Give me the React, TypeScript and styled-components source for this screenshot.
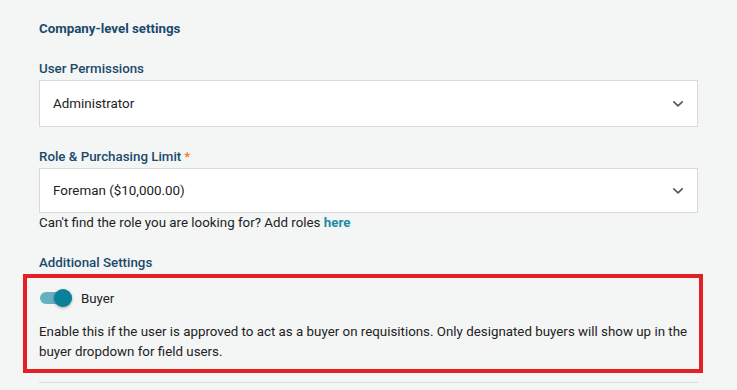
import React, { useState } from "react";
import styled, { createGlobalStyle } from "styled-components";

const Global = createGlobalStyle`
  html, body { margin: 0; padding: 0; background: #f4f6f5; }
  body { font-family: Roboto, "Noto Sans", Arial, sans-serif; color: #222; }
  * { box-sizing: border-box; }
`;

const Page = styled.div`
  padding: 19px 39px 0 39px;
  width: 737px;
  height: 390px;
  overflow: hidden;
`;

const Heading = styled.div`
  font-size: 13.3px;
  font-weight: 700;
  line-height: 20px;
  color: #1b4a6c;
`;

const Label = styled.div<{ $top: number }>`
  margin-top: ${(p) => p.$top}px;
  font-size: 13.33px;
  font-weight: 500;
  line-height: 20px;
  color: #1b4a6c;
  margin-bottom: 1px;
`;

const Required = styled.span`
  color: #f07c2a;
  margin-left: 3px;
`;

const Select = styled.div<{ $h: number }>`
  height: ${(p) => p.$h}px;
  background: #fff;
  border: 1px solid #d9d9d9;
  display: flex;
  align-items: center;
  justify-content: space-between;
  padding: 0 13px 0 13px;
  font-size: 13.4px;
  color: #222;
`;

const Helper = styled.div`
  font-size: 13.33px;
  line-height: 20px;
  color: #222;
`;

const LinkText = styled.a`
  color: #1a8ba3;
  font-weight: 700;
  text-decoration: none;
`;

const Highlight = styled.div`
  margin: 0 -5px 0 -16px;
  border: 4px solid #e41f26;
  padding: 10px 0 7px 12px;
`;

const ToggleRow = styled.div`
  display: flex;
  align-items: center;
  height: 20px;
  gap: 8px;
  font-size: 13.3px;
`;

const Track = styled.button<{ $on: boolean }>`
  position: relative;
  width: 34px;
  height: 20px;
  border: none;
  background: transparent;
  padding: 0;
  cursor: pointer;
  &::before {
    content: "";
    position: absolute;
    left: 1px;
    top: 4px;
    width: 32px;
    height: 12px;
    border-radius: 6px;
    background: ${(p) => (p.$on ? "#66b1c0" : "#bbb")};
  }
  &::after {
    content: "";
    position: absolute;
    top: 1px;
    left: ${(p) => (p.$on ? "15px" : "0px")};
    width: 18px;
    height: 18px;
    border-radius: 50%;
    background: ${(p) => (p.$on ? "#0b8099" : "#fafafa")};
    box-shadow: 0 1px 3px rgba(0, 0, 0, 0.35);
  }
`;

const Description = styled.div`
  margin-top: 14px;
  font-size: 13.33px;
  line-height: 20px;
  color: #222;
`;

const Divider = styled.div`
  margin-top: 9px;
  border-top: 1px solid #dcdcdc;
`;

const Chevron = () => (
  <svg width="12" height="8" viewBox="0 0 12 8" fill="none">
    <path d="M1.8 1.8 L6 5.8 L10.2 1.8" stroke="#555" strokeWidth="1.6" strokeLinecap="round" strokeLinejoin="round" />
  </svg>
);

export default function App() {
  const [on, setOn] = useState(true);
  return (
    <>
      <Global />
      <Page>
        <Heading>Company-level settings</Heading>
        <Label $top={20}>User Permissions</Label>
        <Select $h={47}>
          <span>Administrator</span>
          <Chevron />
        </Select>
        <Label $top={20}>
          Role &amp; Purchasing Limit<Required>*</Required>
        </Label>
        <Select $h={45}>
          <span>Foreman ($10,000.00)</span>
          <Chevron />
        </Select>
        <Helper>
          Can't find the role you are looking for? Add roles <LinkText href="#">here</LinkText>
        </Helper>
        <Label $top={20}>Additional Settings</Label>
        <Highlight>
          <ToggleRow>
            <Track $on={on} onClick={() => setOn(!on)} aria-label="Buyer" />
            <span>Buyer</span>
          </ToggleRow>
          <Description>
            Enable this if the user is approved to act as a buyer on requisitions. Only designated buyers will show up in the buyer dropdown for field users.
          </Description>
        </Highlight>
        <Divider />
      </Page>
    </>
  );
}
